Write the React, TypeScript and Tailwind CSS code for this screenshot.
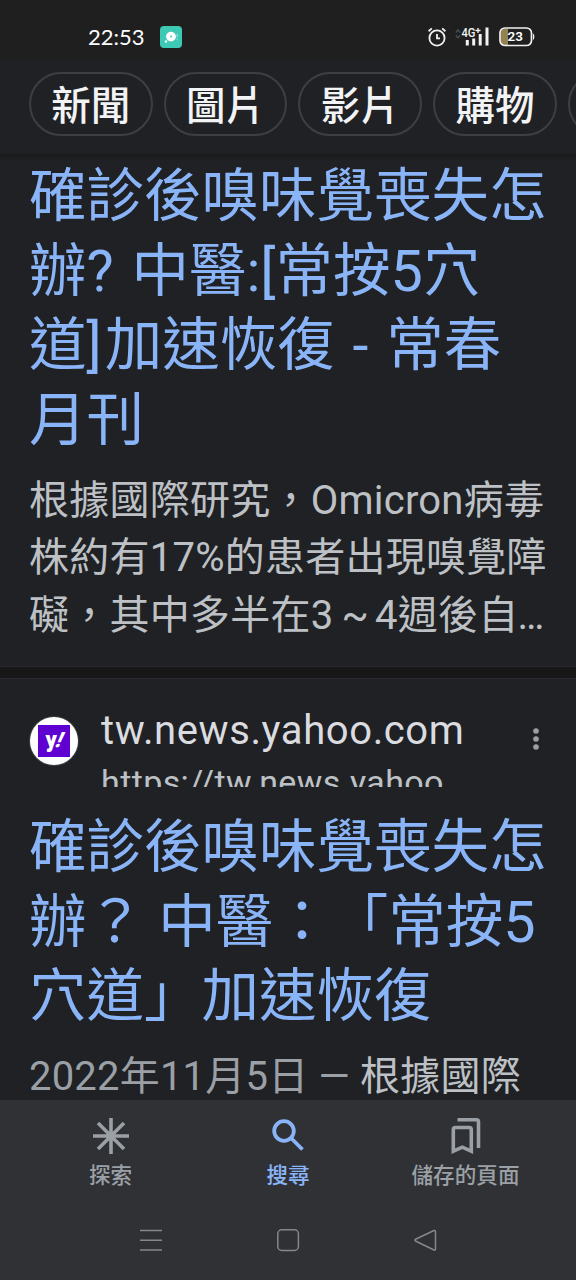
import type { ReactNode } from "react";

const chips = ["新聞", "圖片", "影片", "購物", ""];

function StatusBar() {
  return (
    <div className="flex h-[59px] shrink-0 items-center bg-[#1f1f1f] pt-[14px] pl-[88px] pr-[40px] text-white">
      <span className="w-[57px] font-['Lato','Noto_Sans',sans-serif] text-[22px] leading-none whitespace-nowrap">22:53</span>
      <svg className="ml-[15px]" width="22" height="22" viewBox="0 0 22 22">
        <rect width="22" height="22" rx="4" fill="#3ec9b5" />
        <circle cx="11" cy="10.6" r="4.9" fill="#fff" />
        <circle cx="11" cy="10.6" r="1" fill="#3ec9b5" />
        <circle cx="6" cy="15.5" r="1.2" fill="#fff" />
        <path d="M17.2 8v3.6M17.2 13v1.2" stroke="#a5e8de" strokeWidth="1" />
      </svg>
      <div className="ml-auto flex items-center">
        <svg width="18" height="20" viewBox="0 0 18 20" fill="none" stroke="#f1f1f1" strokeWidth="1.8">
          <circle cx="9" cy="11" r="7.6" />
          <path d="M9 7v4.4h3" />
          <path d="M.6 4.2 3.8 1.4M17.4 4.2 14.2 1.4" />
        </svg>
        <svg className="ml-[9px] overflow-visible" width="36" height="20" viewBox="0 0 36 20">
          <path d="M.8 5.4 2.9 3 5 5.4M.8 8.4 2.9 10.8 5 8.4" fill="none" stroke="#4a4a4a" strokeWidth="1.5" />
          <text x="6.5" y="10" fill="#f1f1f1" fontFamily="Roboto, sans-serif" fontSize="12" fontWeight="500" textLength="14" lengthAdjust="spacingAndGlyphs">
            4G
          </text>
          <path d="M20.5 3.5h5M23 1v5" stroke="#f1f1f1" strokeWidth="1.3" />
          <path d="M12.3 13v5.5M18.7 11.5v7M25.2 7v11.5M32 .5v18" stroke="#f1f1f1" strokeWidth="3" />
        </svg>
        <svg className="ml-[8px]" width="37" height="20" viewBox="0 0 37 20">
          <path d="M6 2h3v16H6a4 4 0 0 1-4-4V6a4 4 0 0 1 4-4z" fill="#94834f" />
          <rect x="1" y="1" width="31.5" height="17.5" rx="5" fill="none" stroke="#f1f1f1" strokeWidth="1.7" />
          <path d="M34 6.5c1.8 1 1.8 5.5 0 6.5z" fill="#f1f1f1" />
          <text x="8.5" y="14.3" fill="#fff" fontFamily="Roboto, sans-serif" fontSize="13.5" fontWeight="600" textLength="15.5">
            23
          </text>
        </svg>
      </div>
    </div>
  );
}

function FilterChips() {
  return (
    <div className="relative z-10 flex h-[95px] shrink-0 gap-[11px] overflow-hidden bg-[#202124] pt-[12.5px] pl-[29px]">
      {chips.map((chip) => (
        <button
          key={chip}
          className="flex h-[64px] w-[123.7px] shrink-0 items-center justify-center rounded-full border-2 border-[#3c4043] pt-[7px] text-[39.5px] leading-none font-medium text-[#f1f3f4]"
        >
          {chip}
        </button>
      ))}
    </div>
  );
}

function Title({ lines }: { lines: ReactNode[] }) {
  return (
    <h3 className="text-[57.5px] leading-[74.7px] text-[#8ab4f8] [text-spacing-trim:space-all]">
      {lines.map((line, i) => (
        <span key={i} className="block whitespace-nowrap">
          {line}
        </span>
      ))}
    </h3>
  );
}

function SiteHeader() {
  return (
    <div className="flex h-[79px]">
      <div className="mt-[9px] flex size-[48px] shrink-0 items-center justify-center rounded-full bg-white ring-1 ring-[#3c4043]">
        <div className="flex size-[32px] items-center justify-center bg-[#5f01d1] font-['Roboto',sans-serif] leading-none font-black text-white">
          <span className="-mt-[3px] text-[22px]">y</span>
          <span className="-mt-[2px] -skew-x-[24deg] text-[21px]">!</span>
        </div>
      </div>
      <div className="ml-[23px] h-[79px] overflow-hidden font-['Roboto',sans-serif]">
        <div className="-mt-px text-[40px] leading-[48px] tracking-[0.6px] text-[#dadce0]">tw.news.yahoo.com</div>
        <div className="mt-[4px] text-[34px] leading-[46px] tracking-[0.4px] text-[#bdc1c6]">https://tw.news.yahoo</div>
      </div>
      <svg className="mt-[20px] mr-[7px] ml-auto" width="6" height="24" viewBox="0 0 6 24" fill="#9aa0a6">
        <circle cx="3" cy="3" r="2.8" />
        <circle cx="3" cy="11" r="2.8" />
        <circle cx="3" cy="19" r="2.8" />
      </svg>
    </div>
  );
}

function NavItem({ label, active, children }: { label: string; active?: boolean; children: ReactNode }) {
  return (
    <div className={`flex w-[177.5px] flex-col items-center ${active ? "text-[#8ab4f8]" : "text-[#9aa0a6]"}`}>
      {children}
      <span className="mt-[5px] text-[21.6px] leading-[32px] font-medium">{label}</span>
    </div>
  );
}

function BottomNav() {
  return (
    <div className="h-[180px] shrink-0 bg-[#303134]">
      <div className="flex h-[116px] justify-center pt-[17px]">
        <NavItem label="探索">
          <svg width="38" height="38" viewBox="0 0 38 38" stroke="currentColor" strokeWidth="3.6">
            <path d="M19 1v36M1 19h36M6 6l26 26M32 6 6 32" />
          </svg>
        </NavItem>
        <NavItem label="搜尋" active>
          <svg width="38" height="38" viewBox="0 0 38 38" fill="none" stroke="currentColor" strokeWidth="3.8">
            <circle cx="15" cy="14" r="9.8" />
            <path d="m22 21 11.5 11.5" />
          </svg>
        </NavItem>
        <NavItem label="儲存的頁面">
          <svg width="38" height="38" viewBox="0 0 38 38" fill="none" stroke="currentColor" strokeWidth="3.6">
            <path d="M6.3 34.2V12.5a2 2 0 0 1 2-2h14a2 2 0 0 1 2 2v21.7l-9-4z" />
            <path d="M10.5 2.8h19a2 2 0 0 1 2 2V31" />
          </svg>
        </NavItem>
      </div>
      <div className="flex justify-center gap-[113px] pt-[12px]">
        <svg width="24" height="24" viewBox="0 0 24 24" stroke="#85878a" strokeWidth="1.5">
          <path d="M1 2.5h22M1 12.2h22M1 22h22" />
        </svg>
        <svg width="24" height="24" viewBox="0 0 24 24" fill="none" stroke="#85878a" strokeWidth="1.5">
          <rect x="1.8" y="1.8" width="20.6" height="20.6" rx="4" />
        </svg>
        <svg width="24" height="24" viewBox="0 0 24 24" fill="none" stroke="#85878a" strokeWidth="1.5" strokeLinejoin="round">
          <path d="M21.5 2.5a1 1 0 0 1 1 1v17.5a1 1 0 0 1-1.5 1L2.5 13a1 1 0 0 1 0-1.8L21 2.5z" />
        </svg>
      </div>
    </div>
  );
}

export default function App() {
  return (
    <div
      lang="zh-Hant"
      className="flex h-[1280px] w-[576px] flex-col overflow-hidden bg-[#202124] font-['Roboto','Noto_Sans_CJK_TC',sans-serif]"
    >
      <StatusBar />
      <FilterChips />
      <div className="min-h-0 flex-1 overflow-hidden">
        <div className="h-[6px] bg-linear-to-b from-[#1a1a1c] to-[#202124]" />
        <article className="h-[506px] pl-[29px]">
          <div className="[word-spacing:3.5px]">
            <Title
              lines={[
                "確診後嗅味覺喪失怎",
                "辦? 中醫:[常按5穴",
                <>
                  道<span className="tracking-[3px]">]</span>加速恢復 - 常春
                </>,
                "月刊",
              ]}
            />
          </div>
          <p className="mt-[13px] text-[40px] leading-[57.5px] tracking-[0.24px] whitespace-nowrap text-[#bdc1c6]">
            根據國際研究，Omicron病毒
            <br />
            株約有17%的患者出現嗅覺障
            <br />
            礙，其中多半在3<span className="tracking-[-1.8px]"> ~ </span>4週後自<span className="-ml-[1px] tracking-[-1px]">…</span>
          </p>
        </article>
        <div className="h-[13px] border-y border-[#292a2d] bg-[#171717]" />
        <article className="pt-[29px] pl-[30px] pr-[30px]">
          <SiteHeader />
          <div className="-ml-px pt-[24px]">
            <Title lines={["確診後嗅味覺喪失怎", "辦？ 中醫：「常按5", "穴道」加速恢復"]} />
            <p className="mt-[13px] text-[40px] leading-[57.5px] tracking-[0.2px] whitespace-nowrap text-[#bdc1c6]">
              <span className="text-[#9aa0a6]">2022年11月5日 — </span>根據國際
            </p>
          </div>
        </article>
      </div>
      <BottomNav />
    </div>
  );
}
